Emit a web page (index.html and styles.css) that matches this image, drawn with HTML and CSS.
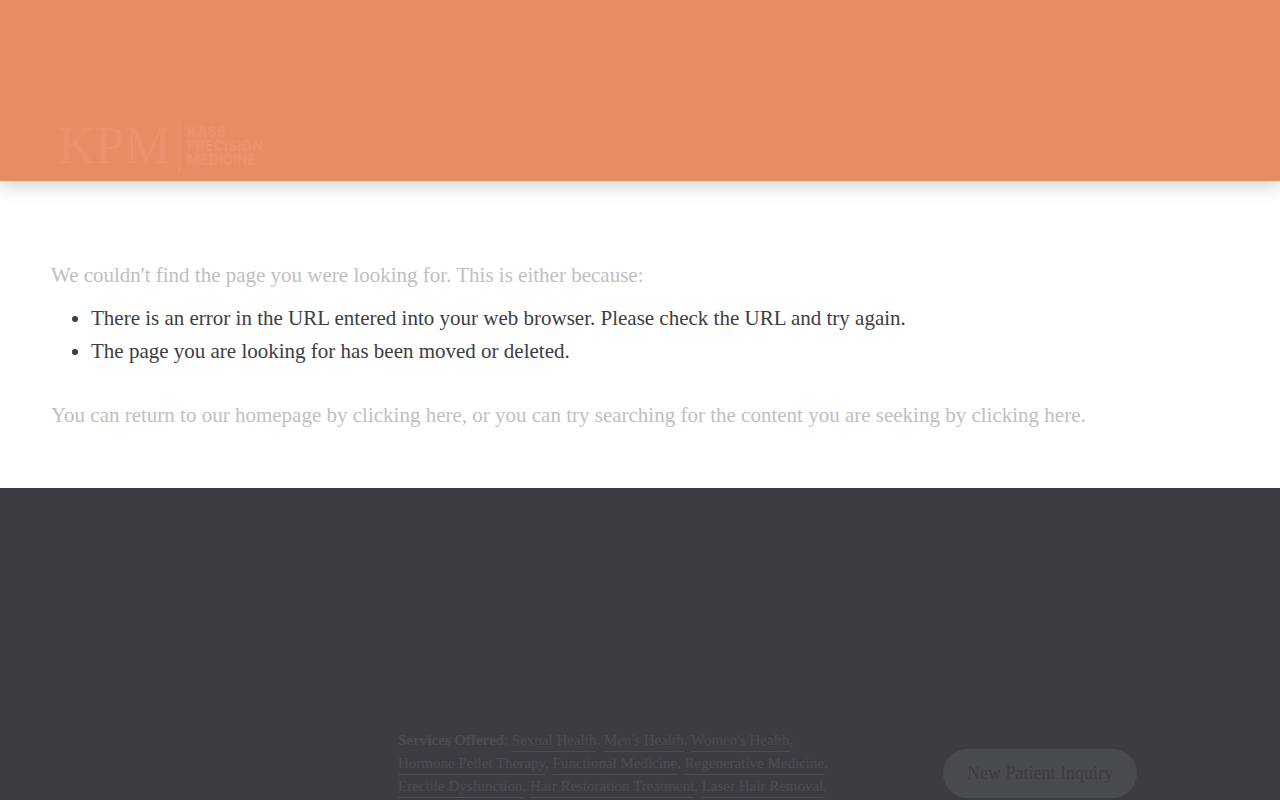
FILE: index.html
```html
<!DOCTYPE html>
<html lang="en">
  <head>
    <meta charset="UTF-8" />
    <meta name="viewport" content="width=device-width, initial-scale=1.0" />
    <title>Kass Precision Medicine</title>
    <link rel="stylesheet" href="styles.css">
  </head>
  <body>
    <header class="header">
      <a class="logo" href="/">
        <span class="logo-initials">KPM</span>
        <span class="logo-name">
          <span>KASS</span>
          <span>PRECISION</span>
          <span>MEDICINE</span>
        </span>
      </a>
    </header>

    <main class="content">
      <p class="faded">We couldn't find the page you were looking for. This is either because:</p>
      <ul class="reasons">
        <li>There is an error in the URL entered into your web browser. Please check the URL and try again.</li>
        <li>The page you are looking for has been moved or deleted.</li>
      </ul>
      <p class="faded">
        You can return to our homepage by <a href="/">clicking here</a>, or you can try searching for the
        content you are seeking by <a href="/search">clicking here</a>.
      </p>
    </main>

    <footer class="footer">
      <p class="services">
        <strong>Services Offered</strong>: <a href="#">Sexual Health</a>, <a href="#">Men's Health</a>, <a href="#">Women's Health</a>,<br />
        <a href="#">Hormone Pellet Therapy</a>, <a href="#">Functional Medicine</a>, <a href="#">Regenerative Medicine</a>,<br />
        <a href="#">Erectile Dysfunction</a>, <a href="#">Hair Restoration Treatment</a>, <a href="#">Laser Hair Removal</a>,
      </p>
      <a class="btn" href="#">New Patient Inquiry</a>
    </footer>
  </body>
</html>
```

FILE: styles.css
```css
* {
  box-sizing: border-box;
}

body {
  display: flex;
  flex-direction: column;
  min-height: 100vh;
  margin: 0;
  background-color: #fff;
  color: #3c3d42;
  font-family: "Liberation Serif", "Times New Roman", serif;
  font-size: 21px;
  line-height: 33px;
}

.header {
  padding: 120px 58px 9px;
  background-color: #e58d63;
  box-shadow: 0 4px 18px rgba(0, 0, 0, 0.2);
}

.logo {
  display: inline-flex;
  align-items: center;
  height: 52px;
  vertical-align: top;
  color: #e9926b;
  text-decoration: none;
}

.logo-initials {
  padding-right: 7px;
  border-right: 2px solid #e9926b;
  font-size: 52px;
  line-height: 52px;
}

.logo-name {
  display: flex;
  flex-direction: column;
  padding-left: 7px;
  font-family: Inter, sans-serif;
  font-size: 14px;
  font-weight: 800;
  line-height: 14px;
}

.content {
  padding: 78px 51px 56px;
}

.content p {
  margin: 0;
}

.faded {
  color: #c0c0c1;
}

.faded a {
  color: inherit;
  text-decoration: none;
}

.reasons {
  margin: 10px 0 31px;
  padding-left: 40px;
}

.footer {
  display: grid;
  grid-template-columns: 430fr 194fr;
  flex: 1;
  align-items: end;
  gap: 115px;
  padding: 0 143px 2px 398px;
  background-color: #3c3d42;
}

.services {
  margin: 0;
  color: #4b4d52;
  font-size: 15px;
  line-height: 23px;
  white-space: nowrap;
}

.services a {
  padding-bottom: 3px;
  border-bottom: 1px solid #4b4d52;
  color: inherit;
  text-decoration: none;
}

.btn {
  padding: 8px 0;
  border-radius: 25px;
  background-color: #484b50;
  color: #3c3d42;
  font-size: 18px;
  text-align: center;
  text-decoration: none;
  white-space: nowrap;
}
```
